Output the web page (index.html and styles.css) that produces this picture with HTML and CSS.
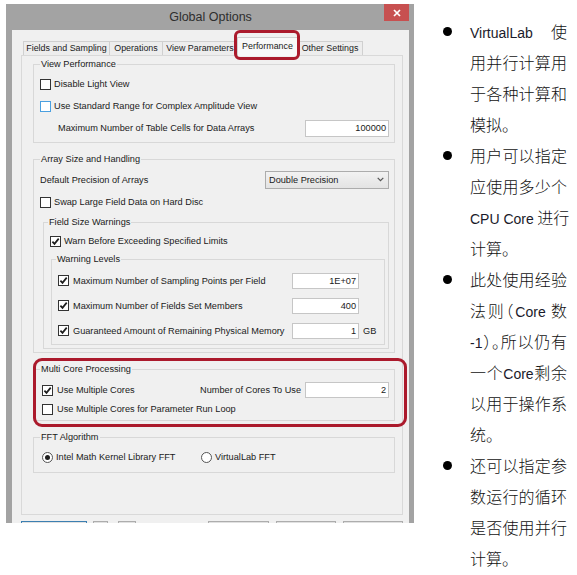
FILE: index.html
```html
<!DOCTYPE html>
<html>
<head>
<meta charset="utf-8">
<title>Global Options</title>
<link rel="stylesheet" href="styles.css">
</head>
<body>
<div class="page">
  <div class="window">
    <div class="titlebar">
      <div class="title">Global Options</div>
      <div class="close">
        <svg width="8" height="8" viewBox="0 0 8 8"><path d="M1 1 L7 7 M7 1 L1 7" stroke="#fff" stroke-width="1.7" fill="none"/></svg>
      </div>
    </div>
    <div class="client">
      <div class="tabs">
        <div class="tab t1">Fields and Sampling</div>
        <div class="tab t2">Operations</div>
        <div class="tab t3">View Parameters</div>
        <div class="tab t4 active">Performance</div>
        <div class="tab t5">Other Settings</div>
      </div>
      <div class="panel">
        <div class="group g1">
          <div class="legend">View Performance</div>
          <div class="row"><span class="cb"></span><span class="lbl">Disable Light View</span></div>
          <div class="row"><span class="cb blue"></span><span class="lbl">Use Standard Range for Complex Amplitude View</span></div>
          <div class="row split"><span class="indent">Maximum Number of Table Cells for Data Arrays</span><span class="inp w84">100000</span></div>
        </div>

        <div class="group g2">
          <div class="legend">Array Size and Handling</div>
          <div class="row split r23"><span>Default Precision of Arrays</span>
            <span class="select"><span>Double Precision</span><svg width="7" height="5" viewBox="0 0 7 5"><path d="M0.7 0.8 L3.5 3.6 L6.3 0.8" stroke="#555" stroke-width="1.2" fill="none"/></svg></span>
          </div>
          <div class="row"><span class="cb"></span><span class="lbl">Swap Large Field Data on Hard Disc</span></div>
          <div class="group fsw">
            <div class="legend">Field Size Warnings</div>
            <div class="row r22 m2"><span class="cb"><svg width="9" height="9" viewBox="0 0 9 9"><path d="M1.4 4.6 L3.5 6.9 L7.7 1.6" stroke="#1e1e1e" stroke-width="1.7" fill="none"/></svg></span><span class="lbl">Warn Before Exceeding Specified Limits</span></div>
            <div class="group wl">
              <div class="legend">Warning Levels</div>
              <div class="lrow"><span class="cb"><svg width="9" height="9" viewBox="0 0 9 9"><path d="M1.4 4.6 L3.5 6.9 L7.7 1.6" stroke="#1e1e1e" stroke-width="1.7" fill="none"/></svg></span><span>Maximum Number of Sampling Points per Field</span><span class="inp h16">1E+07</span><span></span></div>
              <div class="lrow"><span class="cb"><svg width="9" height="9" viewBox="0 0 9 9"><path d="M1.4 4.6 L3.5 6.9 L7.7 1.6" stroke="#1e1e1e" stroke-width="1.7" fill="none"/></svg></span><span>Maximum Number of Fields Set Members</span><span class="inp h16">400</span><span></span></div>
              <div class="lrow"><span class="cb"><svg width="9" height="9" viewBox="0 0 9 9"><path d="M1.4 4.6 L3.5 6.9 L7.7 1.6" stroke="#1e1e1e" stroke-width="1.7" fill="none"/></svg></span><span>Guaranteed Amount of Remaining Physical Memory</span><span class="inp h16">1</span><span class="unit">GB</span></div>
            </div>
          </div>
        </div>

        <div class="group g3">
          <div class="legend">Multi Core Processing</div>
          <div class="row split h20">
            <span class="pair m2"><span class="cb"><svg width="9" height="9" viewBox="0 0 9 9"><path d="M1.4 4.6 L3.5 6.9 L7.7 1.6" stroke="#1e1e1e" stroke-width="1.7" fill="none"/></svg></span><span class="lbl g4px">Use Multiple Cores</span></span>
            <span class="pair"><span>Number of Cores To Use</span><span class="inp w84 h16 ml4">2</span></span>
          </div>
          <div class="row h18 m2"><span class="cb"></span><span class="lbl g4px">Use Multiple Cores for Parameter Run Loop</span></div>
        </div>

        <div class="group g4">
          <div class="legend">FFT Algorithm</div>
          <div class="row h20 m2">
            <span class="opt"><span class="radio on"></span><span class="lbl">Intel Math Kernel Library FFT</span></span>
            <span class="opt"><span class="radio"></span><span class="lbl">VirtualLab FFT</span></span>
          </div>
        </div>
      </div>
      <div class="buttons">
        <span class="btn b1"></span>
        <span class="btn b2"></span>
        <span class="btn b3"></span>
        <span class="btn b4"></span>
        <span class="btn b5"></span>
        <span class="btn b6"></span>
      </div>
    </div>
  </div>

  <div class="notes">
    <div class="item">
      <div class="bullet"></div>
      <div class="lines">
        <div class="l j"><span class="en">VirtualLab</span> 使</div>
        <div class="l j">用并行计算用</div>
        <div class="l j">于各种计算和</div>
        <div class="l">模拟。</div>
      </div>
    </div>
    <div class="item">
      <div class="bullet"></div>
      <div class="lines">
        <div class="l j">用户可以指定</div>
        <div class="l j">应使用多少个</div>
        <div class="l j"><span class="en">CPU Core</span> 进行</div>
        <div class="l">计算。</div>
      </div>
    </div>
    <div class="item">
      <div class="bullet"></div>
      <div class="lines">
        <div class="l j">此处使用经验</div>
        <div class="l j">法则<span class="halt">（</span><span class="en">Core</span> 数</div>
        <div class="l j"><span class="en">-1</span><span class="halt">）。</span>所以仍有</div>
        <div class="l j">一个<span class="en">Core</span>剩余</div>
        <div class="l j">以用于操作系</div>
        <div class="l">统。</div>
      </div>
    </div>
    <div class="item">
      <div class="bullet"></div>
      <div class="lines">
        <div class="l j">还可以指定参</div>
        <div class="l j">数运行的循环</div>
        <div class="l j">是否使用并行</div>
        <div class="l">计算。</div>
      </div>
    </div>
  </div>
</div>
</body>
</html>
```

FILE: styles.css
```css
* { box-sizing: border-box; }
html, body { margin: 0; padding: 0; background: #fff; }
body { font-family: "Liberation Sans", Arial, sans-serif; }

.page { display: flex; align-items: flex-start; }

/* ---------- dialog window ---------- */
.window {
  margin: 4px 0 0 6px;
  width: 408px;
  height: 519px;
  background: #a3a3a3;
  padding: 0 5px 0 6px;
  overflow: hidden;
  display: flex;
  flex-direction: column;
  flex: none;
}
.titlebar {
  flex: none;
  height: 26px;
  display: grid;
  grid-template-columns: 1fr auto 1fr;
}
.title {
  grid-column: 2;
  font-size: 12.5px;
  line-height: 26px;
  color: #2e2e2e;
}
.close {
  grid-column: 3;
  justify-self: end;
  width: 25px;
  height: 17px;
  background: #c75050;
  display: flex;
  align-items: center;
  justify-content: center;
}
.client {
  flex: 1;
  background: #f0f0f0;
  padding: 0 6px 0 9px;
  font-size: 9.2px;
  color: #1a1a1a;
}

/* tabs */
.tabs {
  position: relative;
  z-index: 1;
  display: flex;
  align-items: flex-end;
  height: 19px;
  margin-top: 7px;
  padding-left: 2px;
}
.tab {
  height: 14px;
  margin-bottom: 1px;
  margin-left: -1px;
  border: 1px solid #d0d0d0;
  border-bottom: none;
  background: #ededed;
  font-size: 8.9px;
  line-height: 13px;
  text-align: center;
  white-space: nowrap;
}
.tab.t1 { margin-left: 0; width: 87px; }
.tab.t2 { width: 54px; }
.tab.t3 { width: 76px; }
.tab.t4 { width: 61px; }
.tab.t5 { width: 66px; }
.tab.active {
  position: relative;
  height: 19px;
  margin-bottom: 0;
  background: #f8f8f8;
  line-height: 16px;
}
.tab.active::after {
  content: "";
  position: absolute;
  left: -4px;
  right: -3px;
  top: -8px;
  bottom: -4px;
  border: 3px solid #ab1a2c;
  border-radius: 6px;
}

/* panel */
.panel {
  margin-top: -1px;
  height: 460px;
  border: 1px solid #d9d9d9;
  background: #f0f0f0;
  padding: 0 7px 0 11px;
}

.group {
  border: 1px solid #d8d8d8;
  padding: 0 5px 0 6px;
}
.legend {
  margin-top: -7px;
  height: 12px;
  line-height: 12px;
  width: max-content;
  padding: 0 1px;
  background: #f0f0f0;
}
.g1 { margin-top: 8px; padding-bottom: 3px; }
.g1 .legend { margin-bottom: 3px; }
.g2 { margin-top: 16px; padding-bottom: 3px; }
.g2 .legend { margin-bottom: 3px; }
.fsw { margin: 9px 0 0 3px; padding: 0 3px 3px 4px; }
.fsw .legend { margin-bottom: 2px; }
.wl { margin: 7px 0 0 3px; padding: 0 0 1px 4px; }
.wl .legend { margin-bottom: 3px; }
.g3 { position: relative; margin-top: 16px; padding-bottom: 2px; }
.g3 .legend { margin-bottom: 5px; }
.g3::after {
  content: "";
  position: absolute;
  left: -1px;
  right: -13px;
  top: -12px;
  bottom: -7px;
  border: 3px solid #ab1a2c;
  border-radius: 9px;
}
.g4 { margin-top: 16px; padding-bottom: 5px; }
.g4 .legend { margin-bottom: 4px; }

.row {
  height: 22px;
  display: flex;
  align-items: center;
  white-space: nowrap;
}
.row.r23 { height: 23px; }
.row.h20 { height: 20px; }
.row.h18 { height: 18px; }
.row.split { justify-content: space-between; }
.m2 { margin-left: 2px; }
.indent { margin-left: 18px; }
.lbl { margin-left: 3px; }
.lbl.g4px { margin-left: 4px; }
.pair { display: flex; align-items: center; }
.ml4 { margin-left: 4px; }

.lrow {
  height: 25px;
  margin-left: 2px;
  display: grid;
  grid-template-columns: 11px 1fr 67px 21px;
  column-gap: 4px;
  align-items: center;
  white-space: nowrap;
}

.cb {
  flex: none;
  width: 11px;
  height: 11px;
  border: 1px solid #333;
  background: #fff;
  display: flex;
  align-items: center;
  justify-content: center;
}
.cb.blue { border-color: #4ba0e0; }
.cb svg { display: block; }

.radio {
  flex: none;
  width: 11px;
  height: 11px;
  border: 1px solid #555;
  border-radius: 50%;
  background: #fff;
  display: flex;
  align-items: center;
  justify-content: center;
}
.radio.on::after {
  content: "";
  width: 5px;
  height: 5px;
  border-radius: 50%;
  background: #1e1e1e;
}
.opt { display: flex; align-items: center; width: 159px; }

.inp {
  display: block;
  height: 17px;
  border: 1px solid #c6c6c6;
  background: #fff;
  text-align: right;
  padding-right: 2px;
  line-height: 15px;
}
.inp.w84 { width: 84px; }
.inp.h16 { height: 16px; line-height: 14px; }

.select {
  width: 124px;
  height: 18px;
  border: 1px solid #acacac;
  background: linear-gradient(#f2f2f2, #e3e3e3);
  display: flex;
  align-items: center;
  justify-content: space-between;
  padding: 0 4px 0 3px;
}

/* bottom buttons */
.buttons {
  display: flex;
  margin-top: 6px;
  height: 22px;
}
.btn {
  height: 22px;
  border: 1px solid #adadad;
  background: #e1e1e1;
}
.b1 { width: 66px; border-color: #3c7fb1; }
.b2 { width: 15px; margin-left: 6px; }
.b3 { width: 18px; margin-left: 10px; }
.b4 { width: 61px; margin-left: auto; }
.b5 { width: 60px; margin-left: 7px; }
.b6 { width: 60px; margin-left: 7px; }

/* ---------- notes ---------- */
.notes {
  margin: 16px 0 0 26px;
  font-family: "Noto Sans CJK SC", sans-serif;
  font-size: 16px;
  font-weight: 300;
  line-height: 31px;
  color: #111;
}
.item { display: flex; }
.bullet {
  flex: none;
  width: 30px;
  height: 31px;
  display: flex;
  align-items: center;
}
.bullet::before {
  content: "";
  width: 9px;
  height: 9px;
  border-radius: 50%;
  background: #000;
  margin-left: 3px;
}
.lines { width: 97px; }
.l { height: 31px; white-space: nowrap; }
.j { text-align: justify; text-align-last: justify; }
.en { font-family: "Liberation Sans", sans-serif; font-size: 14px; font-weight: 400; color: #1a1a2a; }
.halt { font-feature-settings: "halt"; }
```
